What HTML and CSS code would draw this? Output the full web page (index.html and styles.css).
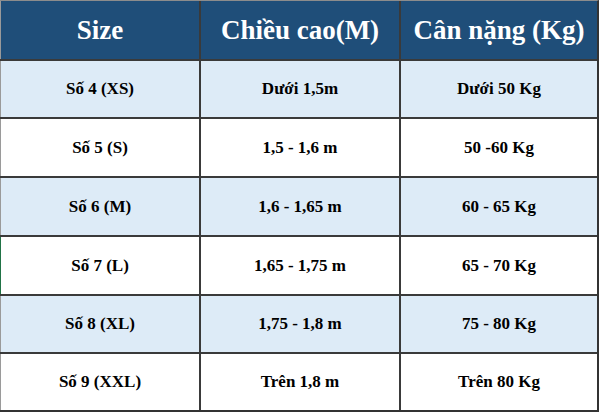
FILE: index.html
```html
<!DOCTYPE html>
<html lang="vi">
<head>
<meta charset="utf-8">
<link rel="stylesheet" href="styles.css">
</head>
<body>
<div class="sheet">
  <div class="cell head first">Size</div>
  <div class="cell head">Chiều cao(M)</div>
  <div class="cell head">Cân nặng (Kg)</div>

  <div class="cell alt first">Số 4 (XS)</div>
  <div class="cell alt">Dưới 1,5m</div>
  <div class="cell alt">Dưới 50 Kg</div>

  <div class="cell first">Số 5 (S)</div>
  <div class="cell">1,5 - 1,6 m</div>
  <div class="cell">50 -60 Kg</div>

  <div class="cell alt first">Số 6 (M)</div>
  <div class="cell alt">1,6 - 1,65 m</div>
  <div class="cell alt">60 - 65 Kg</div>

  <div class="cell first selected">Số 7 (L)</div>
  <div class="cell">1,65 - 1,75 m</div>
  <div class="cell">65 - 70 Kg</div>

  <div class="cell alt first">Số 8 (XL)</div>
  <div class="cell alt">1,75 - 1,8 m</div>
  <div class="cell alt">75 - 80 Kg</div>

  <div class="cell first">Số 9 (XXL)</div>
  <div class="cell">Trên 1,8 m</div>
  <div class="cell">Trên 80 Kg</div>
</div>
</body>
</html>
```

FILE: styles.css
```css
html, body {
  margin: 0;
  padding: 0;
  background: #ffffff;
}

.sheet {
  width: 597px;
  display: grid;
  grid-template-columns: 199px 198px 196px;
  grid-template-rows: 58px 56px 57px 57px 57px 56px 56px;
  column-gap: 2px;
  row-gap: 2px;
  background: #3a3a3a;
  border-top: 1px solid #8c8c8c;
  border-right: 2px solid #333333;
  border-bottom: 2px solid #333333;
  font-family: "Liberation Serif", "Times New Roman", serif;
  font-weight: bold;
}

.cell {
  display: flex;
  align-items: center;
  justify-content: center;
  background: #ffffff;
  color: #000000;
  font-size: 17px;
  white-space: nowrap;
}

.cell.first {
  border-left: 1px solid #9a9a9a;
}

.cell.selected {
  border-left-color: #217346;
}

.cell.alt {
  background: #ddebf7;
}

.cell.head {
  background: #1f4e79;
  color: #ffffff;
  font-size: 27px;
}
```
